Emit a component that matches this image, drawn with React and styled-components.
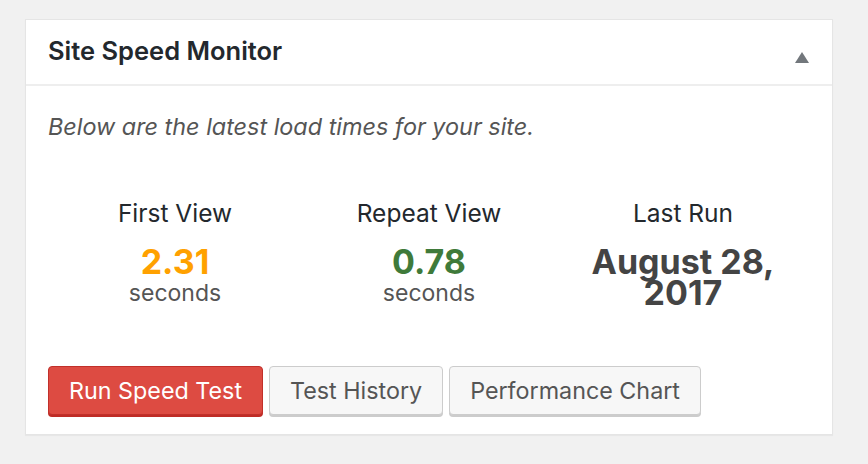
import styled, { createGlobalStyle } from 'styled-components';

const GlobalStyle = createGlobalStyle`
  html, body {
    margin: 0;
    padding: 0;
    background: #f1f1f1;
    font-family: Inter, "Liberation Sans", sans-serif;
  }
`;

const Page = styled.div`
  padding: 19px 35px 27px 25px;
`;

const Panel = styled.div`
  background: #fff;
  border: 1px solid #e5e5e5;
  box-shadow: 0 1px 1px rgba(0, 0, 0, 0.04);
`;

const Header = styled.div`
  display: flex;
  align-items: center;
  justify-content: space-between;
  height: 64px;
  padding: 0 23px 0 22px;
  border-bottom: 2px solid #eee;
`;

const Title = styled.h2`
  margin: -3px 0 0;
  font-size: 25.5px;
  font-weight: 600;
  color: #23282d;
`;

const Toggle = styled.span`
  width: 0;
  height: 0;
  border-left: 7px solid transparent;
  border-right: 7px solid transparent;
  border-bottom: 11px solid #72777c;
  margin-top: 10px;
`;

const Body = styled.div`
  padding: 26px 22px 19px 22px;
`;

const Intro = styled.p`
  margin: 0;
  font-size: 23.4px;
  line-height: 30px;
  font-style: italic;
  color: #555;
`;

const Stats = styled.div`
  display: grid;
  grid-template-columns: repeat(3, 1fr);
  margin-top: 56px;
`;

const Stat = styled.div`
  display: flex;
  flex-direction: column;
  align-items: center;
  text-align: center;
`;

const Label = styled.div`
  font-size: 24.5px;
  color: #23282d;
  line-height: 30px;
  margin-bottom: 18px;
`;

const Value = styled.div`
  font-size: 34px;
  font-weight: 700;
  line-height: 31px;
  color: ${(p) => p.$color};
`;

const Unit = styled.div`
  font-size: 23px;
  color: #555;
  line-height: 32px;
`;

const Actions = styled.div`
  display: flex;
  gap: 6px;
  margin-top: 57px;
`;

const Button = styled.button`
  font-family: inherit;
  font-size: 23.3px;
  height: 49px;
  padding: 0 20px;
  border-radius: 4px;
  cursor: pointer;
  background: ${(p) => (p.$primary ? '#dd4b42' : '#f7f7f7')};
  color: ${(p) => (p.$primary ? '#fff' : '#555')};
  border: 1px solid ${(p) => (p.$primary ? '#c1302a' : '#ccc')};
  box-shadow: 0 2px 0 ${(p) => (p.$primary ? '#bf2c26' : '#ccc')};
`;

export default function App() {
  return (
    <>
      <GlobalStyle />
      <Page>
        <Panel>
          <Header>
            <Title>Site Speed Monitor</Title>
            <Toggle />
          </Header>
          <Body>
            <Intro>Below are the latest load times for your site.</Intro>
            <Stats>
              <Stat>
                <Label>First View</Label>
                <Value $color="#ffa100">2.31</Value>
                <Unit>seconds</Unit>
              </Stat>
              <Stat>
                <Label>Repeat View</Label>
                <Value $color="#3f7a3a">0.78</Value>
                <Unit>seconds</Unit>
              </Stat>
              <Stat>
                <Label>Last Run</Label>
                <Value $color="#444">
                  August 28,
                  <br />
                  2017
                </Value>
              </Stat>
            </Stats>
            <Actions>
              <Button $primary>Run Speed Test</Button>
              <Button>Test History</Button>
              <Button>Performance Chart</Button>
            </Actions>
          </Body>
        </Panel>
      </Page>
    </>
  );
}
